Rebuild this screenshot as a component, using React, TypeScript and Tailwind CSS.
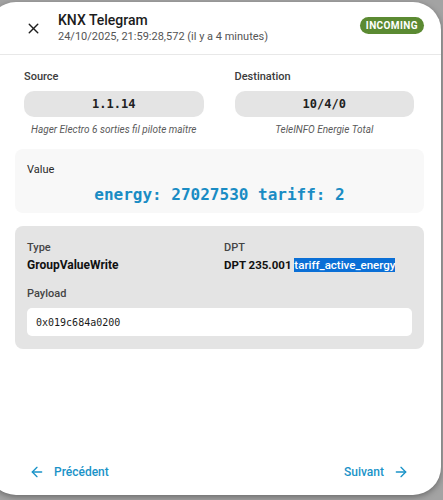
import { X, ArrowLeft, ArrowRight } from 'lucide-react'

const mono = "font-['DejaVu_Sans_Mono','Liberation_Mono',monospace]"

function Field({ label, value, caption }: { label: string; value: string; caption: string }) {
  return (
    <div className="flex flex-col">
      <span className="text-[11px] font-medium leading-[14px] text-[#3c3c3c]">{label}</span>
      <div
        className={`${mono} mt-[7px] flex h-[26px] items-center justify-center rounded-[10px] bg-[#e4e4e4] text-[12px] font-bold text-[#212121]`}
      >
        {value}
      </div>
      <span className="mt-[6px] text-center text-[10px] italic leading-[14px] text-[#5a5a5a]">
        {caption}
      </span>
    </div>
  )
}

export default function App() {
  return (
    <div className="h-[500px] w-[443px] overflow-hidden bg-[#a3a3a3] font-['Roboto','Liberation_Sans',sans-serif]">
      <div className="ml-[-12px] mt-[2px] flex h-[493px] w-[453px] flex-col rounded-[28px] bg-white pl-[12px] shadow-[0_2px_6px_rgba(0,0,0,0.35)]">
        {/* Header */}
        <div className="flex h-[53px] items-center border-b border-[#e8e8e8] pr-[17px]">
          <div className="flex w-[58px] justify-center pl-[8px]">
            <X className="h-[17px] w-[17px] text-[#1f1f1f]" strokeWidth={2} />
          </div>
          <div className="flex flex-1 flex-col">
            <span className="text-[14px] font-medium leading-[18px] text-[#1c1c1c]">KNX Telegram</span>
            <span className="text-[11px] leading-[16px] text-[#555]">
              24/10/2025, 21:59:28,572 (il y a 4 minutes)
            </span>
          </div>
          <span className="mb-[6px] rounded-full bg-[#5b8a32] px-[6px] py-[1px] text-[10px] font-bold tracking-[0.04em] text-white">
            INCOMING
          </span>
        </div>

        {/* Source / Destination */}
        <div className="grid grid-cols-2 gap-[31px] pl-[24px] pr-[27px] pt-[15px]">
          <Field label="Source" value="1.1.14" caption="Hager Electro 6 sorties fil pilote maître" />
          <Field label="Destination" value="10/4/0" caption="TeleINFO Energie Total" />
        </div>

        {/* Value */}
        <div className="ml-[15px] mr-[17px] mt-[12px] flex h-[64px] flex-col rounded-[8px] bg-[#f8f8f8] px-[12px] pt-[14px]">
          <span className="text-[11px] leading-[14px] text-[#2a2a2a]">Value</span>
          <span className={`${mono} mt-[8px] text-center text-[16px] font-bold leading-[20px] text-[#1a8cc4]`}>
            energy: 27027530 tariff: 2
          </span>
        </div>

        {/* Details */}
        <div className="ml-[15px] mr-[17px] mt-[13px] flex flex-col rounded-[8px] bg-[#e4e4e4] pb-[13px] pl-[12px] pr-[12px] pt-[15px]">
          <div className="grid grid-cols-[185px_1fr] gap-[12px]">
            <div className="flex flex-col">
              <span className="text-[11px] font-medium leading-[14px] text-[#444]">Type</span>
              <span className="mt-[2px] text-[12px] font-bold leading-[16px] text-[#111]">GroupValueWrite</span>
            </div>
            <div className="flex flex-col">
              <span className="text-[11px] font-medium leading-[14px] text-[#444]">DPT</span>
              <span className="mt-[2px] text-[11.5px] font-bold leading-[16px] text-[#111]">
                DPT 235.001{' '}
                <span className="bg-[#0a6fd6] font-medium text-white">tariff_active_energy</span>
              </span>
            </div>
          </div>
          <span className="mt-[14px] text-[11px] font-medium leading-[14px] text-[#444]">Payload</span>
          <div className={`${mono} mt-[7px] flex h-[28px] items-center rounded-[5px] bg-white px-[9px] text-[10px] text-[#1a1a1a]`}>
            0x019c684a0200
          </div>
        </div>

        {/* Footer */}
        <div className="mt-auto flex items-center justify-between pb-[14px] pl-[29px] pr-[32px] text-[12px] font-medium text-[#1a93c8]">
          <button type="button" className="flex items-center gap-[9px]">
            <ArrowLeft className="h-[16px] w-[16px]" strokeWidth={2} />
            Précédent
          </button>
          <button type="button" className="flex items-center gap-[9px]">
            Suivant
            <ArrowRight className="h-[16px] w-[16px]" strokeWidth={2} />
          </button>
        </div>
      </div>
    </div>
  )
}
